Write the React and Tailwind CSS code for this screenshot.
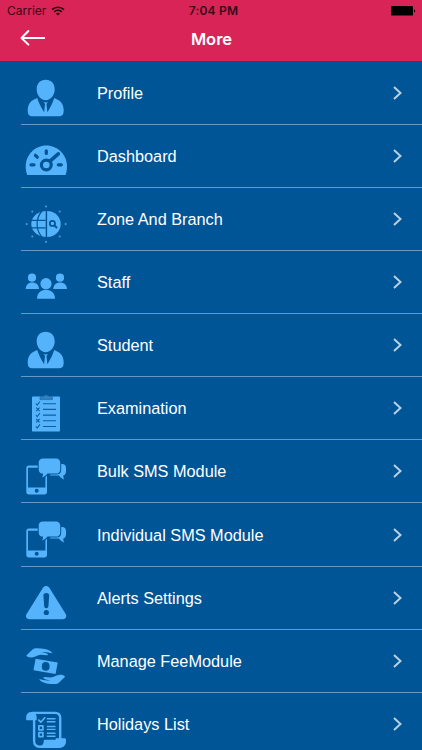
import React from "react";

const PersonIcon = () => (
  <>
    <path d="M23.7 7.7c5.4 0 9 3.6 9 9.6 0 5.8-4 11-9 11s-9-5.200-9-11c0-6 3.600-9.600 9-9.600z" />
    <path d="M15.200 26c1.500 4.800 3.800 9.200 6.900 14.200l.9-8.200-1.500-2.200c1.500.8 3 .8 4.500 0L24.500 32l.9 8.200c3.100-5 5.400-9.400 6.800-14.200 6 2.200 9.500 5.700 9.500 12.300 0 4.500-1.500 6-5 6h-26c-3.500 0-5-1.500-5-6 0-6.600 3.500-10.100 9.500-12.300z" />
  </>
);

const DashboardIcon = () => (
  <>
    <path d="M5.200 39.900C4.200 37.500 3.700 35 3.700 31.500c0-11.500 9.200-20.900 20.600-20.900S45 20 45 31.500c0 3.500-.5 6-1.500 8.400z" />
    <g stroke="#005596" strokeWidth="3.200" strokeLinecap="round" fill="none">
      <path d="M24.300 15.800v2.600M13.400 20.300l1.900 1.900M9 29.800h3M36.300 29.800h3" />
      <circle cx="24.300" cy="30" r="4.900" />
      <path d="M28.300 25.800l8-7" strokeWidth="3.600" />
    </g>
  </>
);

const GlobeIcon = () => (
  <>
    <path d="M25.100 13.100c7.800 0 13.600 5.700 13.600 13s-5.800 13-13.600 13z" />
    <path d="M23.700 13.100c-8.400.4-14.400 6-14.400 13s6 12.600 14.400 13z" />
    <g fill="none" stroke="#005596" strokeWidth="1.200">
      <path d="M9 22.300h14.700M9 29.900h14.700M20 13c-6.600 7.500-6.600 18.700 0 26.200" />
      <circle cx="30.400" cy="25.400" r="2.600" strokeWidth="1.700" />
      <path d="M32.400 27.400l2.700 2.500" strokeWidth="2" />
    </g>
    <g opacity=".75">
      <circle cx="24" cy="8.500" r="1.100" />
      <circle cx="24" cy="43.800" r="1.100" />
      <circle cx="4.700" cy="26.100" r="1.100" />
      <circle cx="43.600" cy="26.100" r="1.100" />
      <circle cx="10.300" cy="13.500" r="1.100" />
      <circle cx="37.700" cy="13.500" r="1.100" />
      <circle cx="10.300" cy="38.500" r="1.100" />
      <circle cx="37.700" cy="38.500" r="1.100" />
    </g>
  </>
);

const StaffIcon = () => (
  <>
    <circle cx="10" cy="16.700" r="4.100" />
    <circle cx="38" cy="16.700" r="4.100" />
    <circle cx="24" cy="22.700" r="5.600" />
    <path d="M3.700 28c0-4 2.700-6.600 6.600-6.600S17 24 17 28z" />
    <path d="M31.300 28c0-4 2.800-6.600 6.800-6.600S45 24 45 28z" />
    <path d="M15 37.700c0-5.500 3.700-9 9-9s9 3.500 9 9z" />
  </>
);

const ExamIcon = () => (
  <>
    <rect x="10" y="9.500" width="28" height="35" rx=".8" />
    <path
      d="M19 9.400h2.600c.5-1.700 4.700-1.700 5.200 0h2.600c.7 0 1 .4 1 1v2.200H18v-2.200c0-.6.300-1 1-1z"
      fill="#3181bd"
      stroke="#1768a8"
      strokeWidth=".7"
    />
    <g fill="none" stroke="#115f9f" strokeWidth="1.100">
      <path d="M21 16.700h13M21 22.400h13M21 28.100h13M21 33.700h13M21 39.500h13" />
      <path d="M13.900 16.500l1.300 1.600 2.700-3.600M13.900 28l1.300 1.600 2.700-3.600M13.900 39.400l1.300 1.600 2.700-3.600" />
      <path d="M14.200 20.700l3.400 3.400m0-3.400l-3.400 3.400M14.200 32l3.400 3.400m0-3.400L14.200 35.400" />
    </g>
  </>
);

const SmsIcon = () => (
  <>
    <path
      fillRule="evenodd"
      d="M6.800 15.400h15.700c1.500 0 2.500 1 2.500 2.500v24c0 1.500-1 2.500-2.500 2.500H6.800c-1.500 0-2.500-1-2.500-2.500v-24c0-1.500 1-2.500 2.500-2.500zM6 17.700v19.700h17.400V17.700z"
    />
    <circle cx="14.700" cy="40.800" r="2" fill="#005596" />
    <path d="M30 14h10c2.600 0 4 1.600 4 4v3.600c0 2.200-1 3.500-2.700 3.800 0 1.600.2 2.800 1 4.200-2-.6-3.800-2-5.300-4.100h-9z" />
    <path
      d="M20.900 8.400H34c2.600 0 4.200 1.600 4.200 4.200v6.800c0 2.600-1.600 4.200-4.200 4.200h-8.500c-1.400 2-3.300 3.300-5.400 4 .7-1.300 1-2.600.9-4-2.700 0-4.300-1.600-4.300-4.200v-6.800c0-2.600 1.600-4.200 4.200-4.200z"
      stroke="#005596"
      strokeWidth="2"
      paintOrder="stroke"
    />
  </>
);

const AlertIcon = () => (
  <>
    <path d="M21.100 10.600c1.400-2.300 4.700-2.300 6.100 0l16.500 26.500c1.500 2.500 0 5.100-2.800 5.100H7.400c-2.800 0-4.300-2.600-2.800-5.100z" />
    <path
      d="M24.300 15.900c1.900 0 3 .9 2.900 2.700l-.8 10.700c-.1 1.200-.8 1.900-2.100 1.900s-2-.7-2.100-1.900l-.8-10.700c-.1-1.800 1-2.700 2.900-2.700z"
      fill="#005596"
    />
    <circle cx="24.300" cy="35.500" r="2.600" fill="#005596" />
  </>
);

const Hand = ({ transform }) => (
  <path
    transform={transform}
    d="M4.300 15.600l6-5.900C11.800 8.500 13 8.100 15 8.200c5.500.1 10.500 1 13.200 2.700 1 .7 1.600 1.300 2 2.300-2.700-.8-5.300-1.200-8.200-1.300l-3.300.1c2.800.3 5.200.9 6.900 1.900.5.400.4 1.200-.3 1.300-2.500 0-4.700-.4-6.900-.5-2.400.1-5.200 2.500-9 2.800-2.100.1-3.800-.2-5.100-1.900z"
  />
);

const FeeIcon = () => (
  <>
    <Hand />
    <path d="M13.600 18.700l22.100 3.700-2.100 11.700-22.100-3.800z" />
    <ellipse cx="23.700" cy="26.400" rx="3.900" ry="4.300" fill="#005596" />
    <Hand transform="rotate(180 23.700 26.150)" />
  </>
);

const ListIcon = () => (
  <g fill="none" stroke="currentColor" strokeWidth="2.400" strokeLinejoin="round">
    <path d="M33.700 36.500h9v1.800c0 3.400-2.200 5.400-5.200 5.400H17.300c-3.200 0-5.200-2.300-5.200-5.500V15" />
    <path d="M10 9.900h23c3.500 0 5.200 2 5.200 5.200v21.400" />
    <path d="M4.900 16.500v-1.700c0-3 1.900-4.900 4.700-4.900s4.300 1.900 4.300 4.900v1.700z" fill="currentColor" strokeWidth="1.600" />
    <path d="M22.500 37.500h20.700c-.1 4.200-2 6.500-5.800 6.500H18.500c2.500-1 4-3 4-6.500z" fill="currentColor" strokeWidth="1.400" />
    <g strokeWidth="1.700">
      <path d="M16.300 16.700l2.500 2.500 4.400-4.900" />
      <path d="M24.800 15.700h8.700M24.800 18.700h8.700M24.800 23.500h8.700M24.800 26.400h8.700M24.800 30.300h8.700M24.800 33.300h8.700" strokeWidth="1.400" />
      <rect x="16.900" y="22.800" width="4" height="4" />
      <rect x="16.900" y="29.600" width="4" height="4" />
    </g>
  </g>
);

const MENU_ITEMS = [
  { title: "Profile", icon: PersonIcon },
  { title: "Dashboard", icon: DashboardIcon },
  { title: "Zone And Branch", icon: GlobeIcon },
  { title: "Staff", icon: StaffIcon },
  { title: "Student", icon: PersonIcon },
  { title: "Examination", icon: ExamIcon },
  { title: "Bulk SMS Module", icon: SmsIcon },
  { title: "Individual SMS Module", icon: SmsIcon },
  { title: "Alerts Settings", icon: AlertIcon },
  { title: "Manage FeeModule", icon: FeeIcon },
  { title: "Holidays List", icon: ListIcon },
];

function StatusBar() {
  return (
    <div className="grid h-[22px] grid-cols-3 items-center pl-[7px] pr-[6px] text-[12px] text-[#3b0817]">
      <div className="flex items-center gap-[5px]">
        <span>Carrier</span>
        <svg width="14" height="10" viewBox="0 0 14 10" fill="none" stroke="#26030d" strokeWidth="1.600">
          <path d="M1 3.600c3.400-3.200 8.600-3.200 12 0M3.200 5.900c2.200-2 5.400-2 7.600 0" />
          <path d="M7 9.600L4.900 7.500c1.200-1 3-1 4.200 0z" fill="#26030d" stroke="none" />
        </svg>
      </div>
      <div className="pl-1 text-center font-semibold tracking-[0.2px]">7:04 PM</div>
      <svg className="justify-self-end" width="26" height="10" viewBox="0 0 26 10" fill="#000">
        <rect x="1" y="0" width="22" height="9.600" rx="1.200" />
        <path d="M24 3.200c1.600.4 1.600 2.900 0 3.300z" />
      </svg>
    </div>
  );
}

function Header() {
  return (
    <header className="h-[61px] shrink-0 bg-[#d82456] font-['Inter',sans-serif]">
      <StatusBar />
      <div className="grid h-[34px] grid-cols-3 items-center pl-5">
        <button className="pb-0.5" aria-label="Back">
          <svg width="26" height="18" viewBox="0 0 26 18" fill="none" stroke="#fff" strokeWidth="2" strokeLinecap="round" strokeLinejoin="round">
            <path d="M24.200 9H1.800M8.400 2L1.500 9l6.900 6.600" />
          </svg>
        </button>
        <h1 className="-ml-[19px] text-center text-[16.5px] font-semibold text-white">More</h1>
      </div>
    </header>
  );
}

function MenuRow({ item }) {
  const Icon = item.icon;

  return (
    <li className="flex h-[63.15px] shrink-0 pl-[21px]">
      <div className="flex flex-1 items-start border-b border-[#6798c1] pl-px pr-[19px]">
        <svg className="mt-[10px] shrink-0 text-[#55b3fb]" width="48" height="48" viewBox="0 0 48 48" fill="currentColor">
          <Icon />
        </svg>
        <span className="ml-[27px] flex-1 self-center text-[16.3px] leading-6 text-white">
          {item.title}
        </span>
        <svg className="self-center" width="11" height="16" viewBox="0 0 11 16" fill="none" stroke="#b8d0e3" strokeWidth="2">
          <path d="M2 2l6.500 6L2 14" />
        </svg>
      </div>
    </li>
  );
}

export default function App() {
  return (
    <div className="flex h-[750px] w-full flex-col overflow-hidden bg-[#005596] font-['Liberation_Sans',sans-serif]">
      <Header />
      <ul className="flex flex-col pt-[0.5px]">
        {MENU_ITEMS.map((item) => (
          <MenuRow key={item.title} item={item} />
        ))}
      </ul>
    </div>
  );
}
